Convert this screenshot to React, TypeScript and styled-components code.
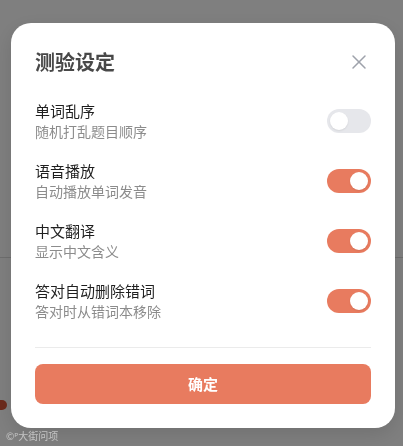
import React, { useState } from "react";
import styled, { createGlobalStyle } from "styled-components";
import { X } from "lucide-react";

const Global = createGlobalStyle`
  html, body { margin: 0; padding: 0; }
  body {
    width: 403px;
    height: 446px;
    overflow: hidden;
    background: #ffffff;
    font-family: "Noto Sans CJK SC", "Noto Sans", sans-serif;
  }
`;

const UnderPage = styled.div`
  height: 446px;
  display: flex;
  flex-direction: column;
  background: #ffffff;
`;

const UnderTop = styled.div`
  height: 257px;
  border-bottom: 1px solid #dcdcdc;
`;

const UnderBody = styled.div`
  flex: 1;
  padding-top: 142px;
  display: flex;
  justify-content: space-between;
`;

const Dot = styled.span`
  width: 14px;
  height: 10px;
  margin-left: -7px;
  border-radius: 5px;
  background: #d9573a;
`;

const Overlay = styled.div`
  position: fixed;
  inset: 0;
  background: rgba(0, 0, 0, 0.5);
  display: flex;
  align-items: center;
  justify-content: center;
  padding-left: 3px;
  padding-top: 4px;
`;

const Modal = styled.div`
  width: 384px;
  box-sizing: border-box;
  background: #ffffff;
  border-radius: 20px;
  padding: 25px 24px 24px;
  display: flex;
  flex-direction: column;
  box-shadow: 0 6px 20px rgba(0, 0, 0, 0.12);
`;

const Header = styled.div`
  height: 28px;
  display: flex;
  align-items: center;
  justify-content: space-between;
  margin-bottom: 15px;
`;

const Title = styled.h2`
  margin: 0;
  font-size: 20px;
  line-height: 28px;
  font-weight: 700;
  color: #484848;
`;

const CloseButton = styled.button`
  width: 24px;
  height: 24px;
  padding: 0;
  border: none;
  background: transparent;
  display: flex;
  align-items: center;
  justify-content: center;
  color: #9ea2ab;
  cursor: pointer;
`;

const Row = styled.div`
  height: 60px;
  display: flex;
  align-items: center;
  justify-content: space-between;
`;

const RowText = styled.div`
  display: flex;
  flex-direction: column;
`;

const RowTitle = styled.div`
  font-size: 15px;
  line-height: 21px;
  color: #1f1f1f;
`;

const RowSub = styled.div`
  font-size: 14px;
  line-height: 20px;
  color: #8c8c8c;
`;

const Switch = styled.button<{ $on: boolean }>`
  width: 44px;
  height: 24px;
  padding: 3px;
  border: none;
  border-radius: 12px;
  background: ${(p) => (p.$on ? "#e87b5f" : "#e6e7eb")};
  display: flex;
  justify-content: ${(p) => (p.$on ? "flex-end" : "flex-start")};
  align-items: center;
  box-sizing: border-box;
  cursor: pointer;
`;

const Knob = styled.span`
  width: 18px;
  height: 18px;
  border-radius: 50%;
  background: #ffffff;
  box-shadow: 0 1px 2px rgba(0, 0, 0, 0.08);
`;

const Divider = styled.div`
  height: 1px;
  background: #ebebeb;
  margin: 16px 0;
`;

const Confirm = styled.button`
  height: 40px;
  border: none;
  border-radius: 8px;
  background: #e87b5f;
  color: #ffffff;
  font-family: "Noto Sans CJK SC", "Noto Sans", sans-serif;
  font-size: 15px;
  font-weight: 700;
  cursor: pointer;
`;

const Watermark = styled.div`
  position: fixed;
  left: 6px;
  bottom: 3px;
  font-size: 10px;
  line-height: 14px;
  color: rgba(255, 255, 255, 0.55);
`;

const items = [
  { title: "单词乱序", sub: "随机打乱题目顺序", on: false },
  { title: "语音播放", sub: "自动播放单词发音", on: true },
  { title: "中文翻译", sub: "显示中文含义", on: true },
  { title: "答对自动删除错词", sub: "答对时从错词本移除", on: true },
];

export default function App() {
  const [state, setState] = useState(items.map((i) => i.on));
  return (
    <>
      <Global />
      <UnderPage>
        <UnderTop />
        <UnderBody>
          <Dot />
        </UnderBody>
      </UnderPage>
      <Overlay>
        <Modal>
          <Header>
            <Title>测验设定</Title>
            <CloseButton aria-label="关闭">
              <X size={28} strokeWidth={1.5} />
            </CloseButton>
          </Header>
          {items.map((it, i) => (
            <Row key={it.title}>
              <RowText>
                <RowTitle>{it.title}</RowTitle>
                <RowSub>{it.sub}</RowSub>
              </RowText>
              <Switch
                $on={state[i]}
                onClick={() =>
                  setState((s) => s.map((v, j) => (j === i ? !v : v)))
                }
              >
                <Knob />
              </Switch>
            </Row>
          ))}
          <Divider />
          <Confirm>确定</Confirm>
        </Modal>
      </Overlay>
      <Watermark>©ᴾ大街问项</Watermark>
    </>
  );
}
